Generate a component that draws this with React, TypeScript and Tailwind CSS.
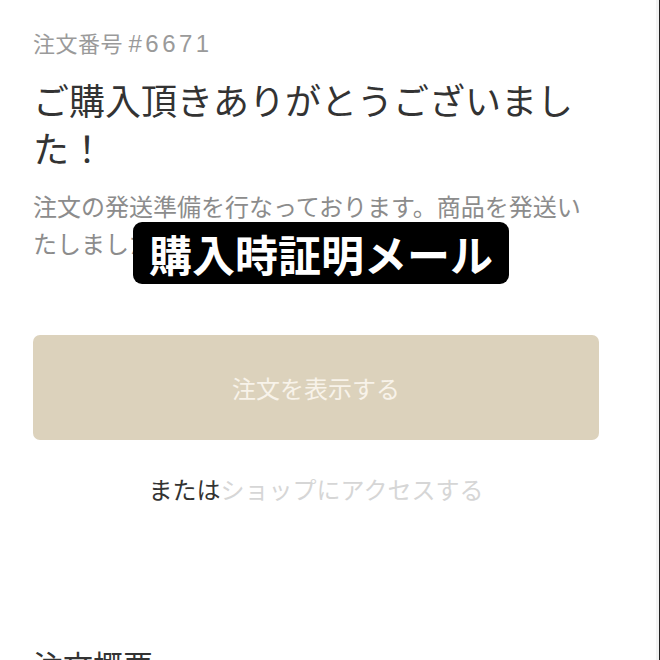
import React from "react";

export default function App() {
  return (
    <div
      className="relative w-[660px] h-[660px] overflow-hidden bg-white flex"
      style={{ fontFamily: '"Noto Sans CJK JP", "Noto Sans", sans-serif' }}
    >
      <div className="flex-1 flex flex-col pl-[33px] pr-[57px] pt-[27px]">
        <div className="shrink-0 text-[22px] leading-[30px] text-[#9a9a9a] tracking-[0.5px]">
          注文番号{" "}
          <span className="text-[24px] tracking-[3.5px]" style={{ fontFamily: '"Liberation Sans", sans-serif' }}>
            #6671
          </span>
        </div>
        <h1 className="shrink-0 mt-[16px] text-[36px] leading-[48px] text-[#333333] font-normal">
          ご購入頂きありがとうございました！
        </h1>
        <p className="shrink-0 mt-[16px] text-[24px] leading-[37px] text-[#8c8c8c]">
          注文の発送準備を行なっております。商品を発送いたしましたらお知らせいたします。
        </p>
        <div className="shrink-0 mt-[74px] h-[105px] rounded-[7px] bg-[#dcd2bc] flex items-center justify-center text-[24px] text-[#f8f3ea]">
          注文を表示する
        </div>
        <div className="shrink-0 mt-[34px] h-[30px] flex items-center justify-center text-[24px] leading-[30px]">
          <span className="text-[#333333]">または</span>
          <span className="text-[#d6d6d6]">ショップにアクセスする</span>
        </div>
        <div className="shrink-0 mt-[142px] text-[30px] leading-[36px] text-[#333333]">注文概要</div>
      </div>
      <div className="w-[3px] bg-[#f3f3f3]" />
      <div className="w-[1px] bg-[#222222]" />
      <div className="absolute left-[133px] top-[222px] w-[376px] h-[62px] rounded-[9px] bg-black flex items-center justify-center text-white text-[43px] font-bold leading-none">
        購入時証明メール
      </div>
    </div>
  );
}
